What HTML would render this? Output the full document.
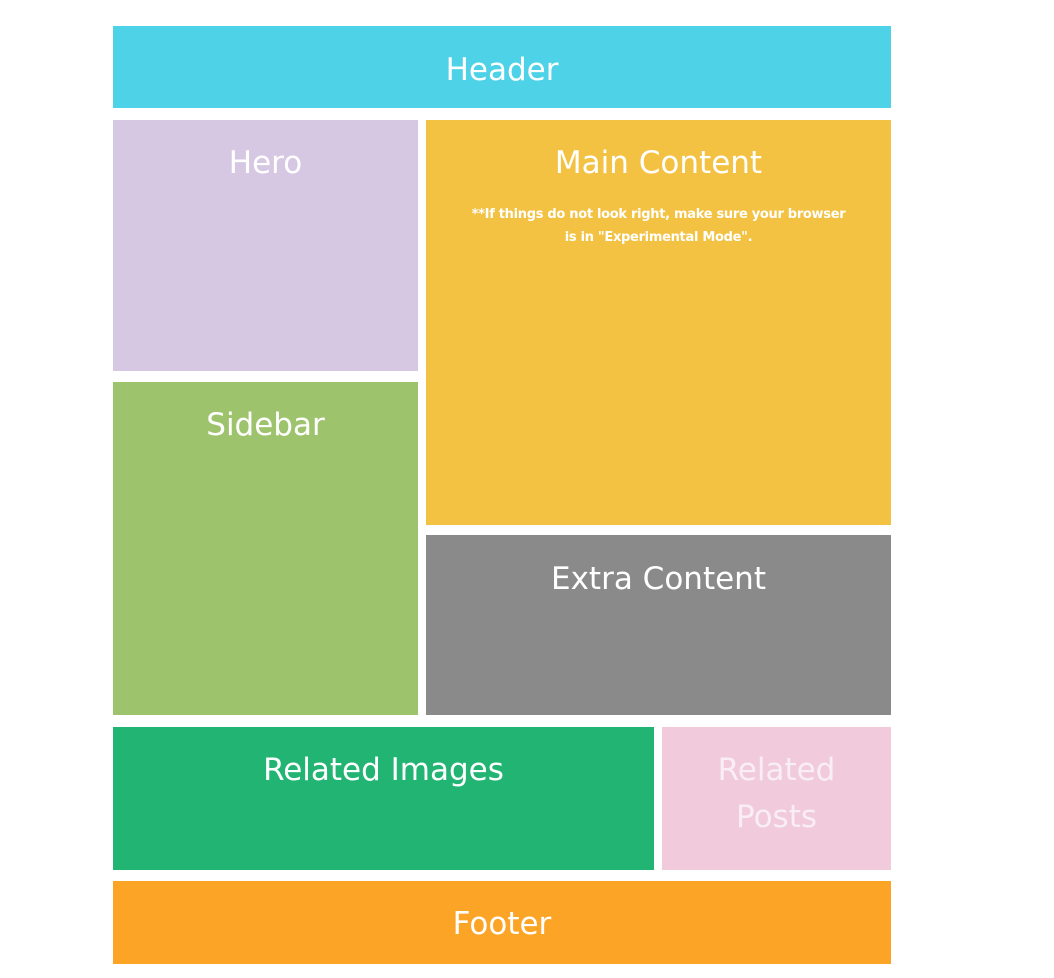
<!DOCTYPE html>
<html><head><style>
body{margin:0;width:1054px;height:978px;background:#fff;position:relative;overflow:hidden;font-family:"DejaVu Sans","Liberation Sans",sans-serif;color:#fff}
.b{position:absolute;text-align:center;font-size:31px;box-sizing:border-box}
.s{font-size:13px;font-weight:bold;line-height:23px;margin-top:22px;padding:0 14px;letter-spacing:-0.3px}
</style></head><body>
<div class="b" style="left:113px;top:26px;width:778px;height:82px;background:#4dd2e8;line-height:88px">Header</div>
<div class="b" style="left:113px;top:120px;width:305px;height:251px;background:#d6c8e2;padding-top:25px">Hero</div>
<div class="b" style="left:426px;top:120px;width:465px;height:405px;background:#f3c243;padding-top:25px">Main Content<div class="s">**If things do not look right, make sure your browser<br>is in "Experimental Mode".</div></div>
<div class="b" style="left:113px;top:382px;width:305px;height:333px;background:#9ec36d;padding-top:25px">Sidebar</div>
<div class="b" style="left:426px;top:535px;width:465px;height:180px;background:#8a8a8a;padding-top:26px">Extra Content</div>
<div class="b" style="left:113px;top:727px;width:541px;height:143px;background:#22b473;padding-top:25px">Related Images</div>
<div class="b" style="left:662px;top:727px;width:229px;height:143px;background:#f1cadc;padding-top:20px;line-height:47px;color:#f8eef3">Related<br>Posts</div>
<div class="b" style="left:113px;top:881px;width:778px;height:83px;background:#fba426;line-height:87px">Footer</div>
</body></html>
